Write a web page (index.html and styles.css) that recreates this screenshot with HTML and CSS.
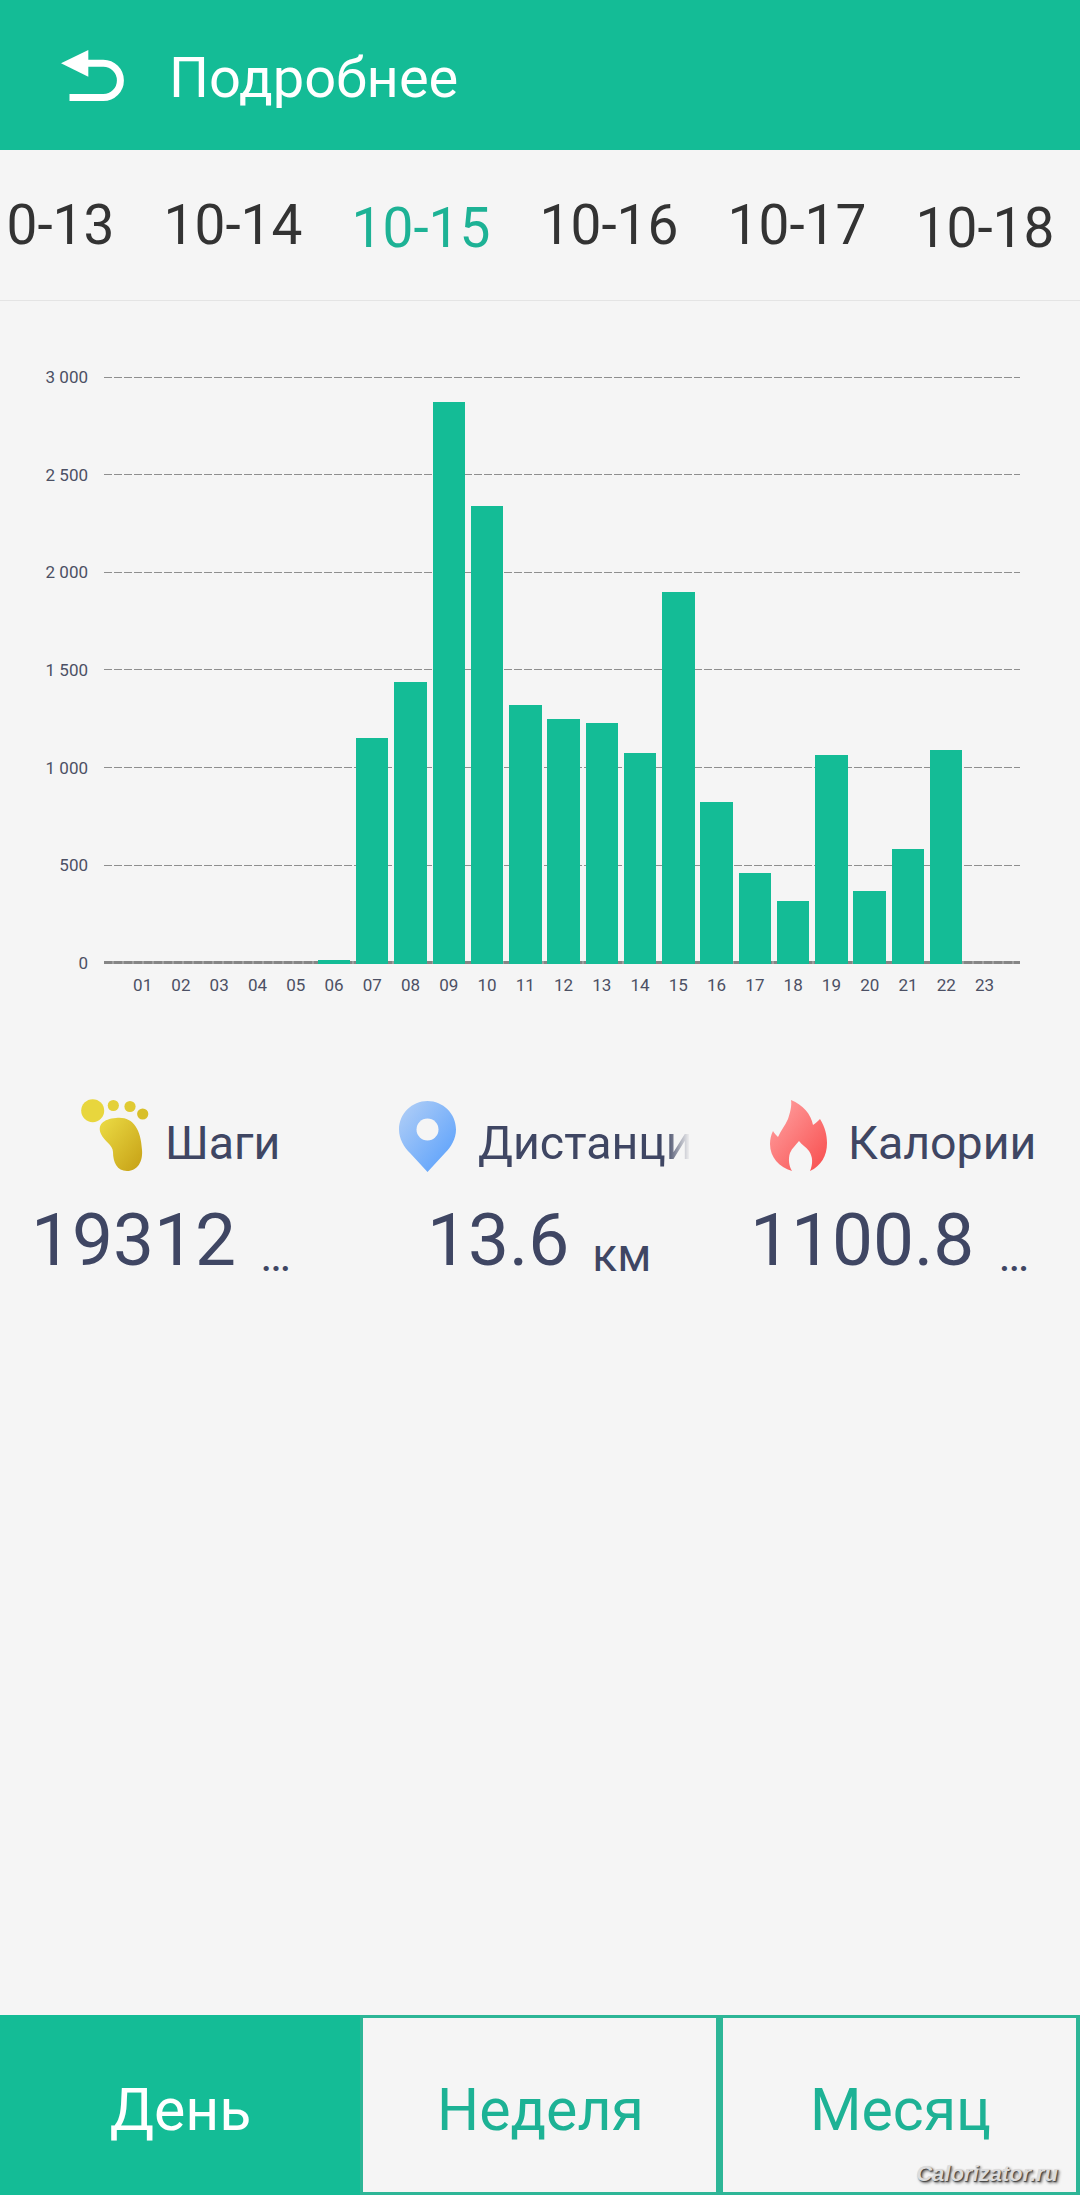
FILE: index.html
```html
<!DOCTYPE html>
<html lang="ru">
<head>
    <meta charset="UTF-8">
    <meta name="viewport" content="width=device-width, initial-scale=1.0">
    <title>Подробнее</title>
    <link rel="stylesheet" href="styles.css">
</head>
<body>
    <div class="page">
        <header class="header">
            <svg class="back-icon" viewBox="8 8 68 54" width="68" height="54">
                <path d="M10 23.3 37.3 10V36.7Z" fill="#fff"/>
                <path d="M36 23.3H52.3a17 17 0 0 1 0 34.2H18.5" fill="none" stroke="#fff" stroke-width="7"/>
            </svg>
            <h1 class="title">Подробнее</h1>
        </header>

        <div class="dates">
            <div class="date">10-13</div>
            <div class="date">10-14</div>
            <div class="date date-active">10-15</div>
            <div class="date">10-16</div>
            <div class="date">10-17</div>
            <div class="date date-low">10-18</div>
        </div>

        <section class="chart">
            <div class="plot">
                <div class="grid-row"><span class="grid-label">3 000</span><span class="grid-line"></span></div>
                <div class="grid-row"><span class="grid-label">2 500</span><span class="grid-line"></span></div>
                <div class="grid-row"><span class="grid-label">2 000</span><span class="grid-line"></span></div>
                <div class="grid-row"><span class="grid-label">1 500</span><span class="grid-line"></span></div>
                <div class="grid-row"><span class="grid-label">1 000</span><span class="grid-line"></span></div>
                <div class="grid-row"><span class="grid-label">500</span><span class="grid-line"></span></div>
                <div class="grid-row"><span class="grid-label">0</span><span class="grid-line grid-line-zero"></span></div>

                <div class="bars slots">
                    <div></div><div></div><div></div><div></div><div></div>
                    <div class="bar" style="height: 4px"></div>
                    <div class="bar" style="height: 226px"></div>
                    <div class="bar" style="height: 282px"></div>
                    <div class="bar" style="height: 562px"></div>
                    <div class="bar" style="height: 458px"></div>
                    <div class="bar" style="height: 259px"></div>
                    <div class="bar" style="height: 245px"></div>
                    <div class="bar" style="height: 241px"></div>
                    <div class="bar" style="height: 211px"></div>
                    <div class="bar" style="height: 372px"></div>
                    <div class="bar" style="height: 162px"></div>
                    <div class="bar" style="height: 91px"></div>
                    <div class="bar" style="height: 63px"></div>
                    <div class="bar" style="height: 209px"></div>
                    <div class="bar" style="height: 73px"></div>
                    <div class="bar" style="height: 115px"></div>
                    <div class="bar" style="height: 214px"></div>
                    <div></div>
                </div>
            </div>
            <div class="hours slots">
                <span>01</span><span>02</span><span>03</span><span>04</span><span>05</span><span>06</span>
                <span>07</span><span>08</span><span>09</span><span>10</span><span>11</span><span>12</span>
                <span>13</span><span>14</span><span>15</span><span>16</span><span>17</span><span>18</span>
                <span>19</span><span>20</span><span>21</span><span>22</span><span>23</span>
            </div>
        </section>

        <section class="stats">
            <div class="stat stat-steps">
                <div class="stat-head">
                    <svg class="stat-icon" viewBox="10 8 70 76" width="70" height="76">
                        <defs>
                            <linearGradient id="footFill" x1="0" y1="0" x2="1" y2="1">
                                <stop offset="0" stop-color="#ecdc45"/>
                                <stop offset="1" stop-color="#c6a015"/>
                            </linearGradient>
                        </defs>
                        <circle cx="22.7" cy="20.7" r="11.5" fill="#e8d63d"/>
                        <circle cx="43.3" cy="15.5" r="5.6" fill="#e4d039"/>
                        <circle cx="60" cy="16.5" r="5.6" fill="#e0ca33"/>
                        <circle cx="72.7" cy="24" r="5.6" fill="#d8bf2a"/>
                        <path d="M46 28C62 26 71 38 72 60 73 71 68 81 57 81 47 81 43 72 43 62 43 55 34 51 31 44 27 35 33 29 46 28Z" fill="url(#footFill)"/>
                    </svg>
                    <span class="stat-label">Шаги</span>
                </div>
                <div class="stat-value"><span class="number">19312</span><span class="unit">…</span></div>
            </div>

            <div class="stat stat-distance">
                <div class="stat-head">
                    <svg class="stat-icon" viewBox="0 0 57 71" width="57" height="71">
                        <defs>
                            <linearGradient id="pinFill" x1="0" y1="0" x2="1" y2="1">
                                <stop offset="0" stop-color="#b4d0f6"/>
                                <stop offset="1" stop-color="#549dfc"/>
                            </linearGradient>
                        </defs>
                        <path d="M28.5 0C44 0 57 12.5 57 28.5 57 38 52 46 46 52L28.5 71 11 52C5 46 0 38 0 28.5 0 12.5 13 0 28.5 0Z" fill="url(#pinFill)"/>
                        <circle cx="28.5" cy="28.5" r="11" fill="#f5f5f5"/>
                    </svg>
                    <span class="stat-label stat-label-fade">Дистанция</span>
                </div>
                <div class="stat-value"><span class="number">13.6</span><span class="unit">км</span></div>
            </div>

            <div class="stat stat-calories">
                <div class="stat-head">
                    <svg class="stat-icon" viewBox="8 9 60 74" width="60" height="74">
                        <defs>
                            <linearGradient id="flameFill" x1="0" y1="0" x2="1" y2="1">
                                <stop offset="0" stop-color="#ffa5a5"/>
                                <stop offset="1" stop-color="#f84c4c"/>
                            </linearGradient>
                        </defs>
                        <path d="M30 10C42 15 50 24 52 35 55 33 57 31 59 29 64 37 66 45 66 53 66 66 60 76 49 81 52 74 52 67 48 61 45 57 41 55 38 51 35 55 31 58 29 63 27 69 28 76 31 81 18 77 9 67 9 54 9 49 10 45 12 41 13 43 15 45 17 47 20 40 24 36 27 29 29 23 31 16 30 10Z" fill="url(#flameFill)"/>
                    </svg>
                    <span class="stat-label">Калории</span>
                </div>
                <div class="stat-value"><span class="number">1100.8</span><span class="unit">…</span></div>
            </div>
        </section>

        <nav class="tabs">
            <div class="tab tab-active">День</div>
            <div class="tab">Неделя</div>
            <div class="tab">Месяц</div>
        </nav>

        <div class="watermark">Calorizator.ru</div>
    </div>
</body>
</html>
```

FILE: styles.css
```css
* {
    margin: 0;
    padding: 0;
    box-sizing: border-box;
}

body {
    font-family: Roboto, sans-serif;
    background-color: #f5f5f5;
}

.page {
    position: relative;
    width: 1080px;
    height: 2195px;
    display: flex;
    flex-direction: column;
    overflow: hidden;
}

.header {
    height: 150px;
    flex-shrink: 0;
    background-color: #14bc96;
    display: flex;
    align-items: center;
    padding-left: 59px;
}

.back-icon {
    flex-shrink: 0;
}

.title {
    margin-left: 42px;
    padding-top: 6px;
    font-size: 56px;
    font-weight: 400;
    color: #fff;
}

/* date strip */
.dates {
    height: 151px;
    flex-shrink: 0;
    display: flex;
    align-items: center;
    margin-left: -49px;
    border-bottom: 1px solid #e4e4e4;
}

.date {
    flex: 0 0 188px;
    text-align: center;
    font-size: 55px;
    color: #333;
}

.date-active {
    padding-top: 5px;
    color: #1db295;
}

.date-low {
    padding-top: 5px;
}

/* chart */
.chart {
    margin-top: 76px;
}

.plot {
    position: relative;
    height: 586px;
    display: flex;
    flex-direction: column;
    justify-content: space-between;
}

.grid-row {
    height: 0;
    display: flex;
    align-items: center;
}

.grid-label {
    width: 88px;
    margin-right: 16px;
    text-align: right;
    font-size: 17px;
    color: #4c5064;
}

.grid-line {
    width: 916px;
    height: 1px;
    background: repeating-linear-gradient(to right, #8f8f8f 0 8px, transparent 8px 10px);
}

.grid-line-zero {
    height: 3px;
    background: repeating-linear-gradient(to right, #858585 0 8px, #a0a0a0 8px 10px);
}

.slots {
    display: grid;
    grid-template-columns: repeat(23, 38.27px);
    padding-left: 19.5px;
}

.bars {
    position: absolute;
    left: 104px;
    bottom: -1px;
    height: 586px;
    align-items: end;
}

.bar {
    width: 32.5px;
    justify-self: center;
    background-color: #14bc96;
}

.hours {
    margin: 12px 0 0 104px;
    font-size: 17px;
    line-height: 20px;
    color: #4c5064;
    text-align: center;
}

/* stats */
.stats {
    margin-top: 103px;
    display: grid;
    grid-template-columns: repeat(3, 360px);
}

.stat-head {
    height: 76px;
    display: flex;
    align-items: center;
}

.stat-icon {
    flex-shrink: 0;
}

.stat-label {
    padding-top: 14px;
    font-size: 46.5px;
    color: #3f4663;
    white-space: nowrap;
}

.stat-label-fade {
    width: 212px;
    overflow: hidden;
    -webkit-mask-image: linear-gradient(to right, #000 188px, transparent);
    mask-image: linear-gradient(to right, #000 188px, transparent);
}

.stat-value {
    margin-top: 24px;
    display: flex;
    align-items: flex-end;
    color: #3f4663;
}

.number {
    font-size: 73px;
    line-height: 84px;
}

.unit {
    font-size: 46px;
    line-height: 54px;
}

.stat-steps .stat-head {
    padding-left: 80px;
}

.stat-steps .stat-label {
    margin-left: 15px;
}

.stat-steps .stat-value {
    padding-left: 31px;
}

.stat-steps .unit {
    margin-left: 24px;
}

.stat-distance .stat-head {
    padding-left: 39px;
}

.stat-distance .stat-label {
    margin-left: 22px;
}

.stat-distance .stat-value {
    padding-left: 67px;
}

.stat-distance .unit {
    margin-left: 23px;
}

.stat-calories .stat-head {
    padding-left: 49px;
}

.stat-calories .stat-label {
    margin-left: 19px;
}

.stat-calories .stat-value {
    padding-left: 30px;
}

.stat-calories .unit {
    margin-left: 24px;
}

/* bottom tabs */
.tabs {
    margin-top: auto;
    height: 180px;
    flex-shrink: 0;
    display: flex;
}

.tab {
    flex: 1;
    display: flex;
    align-items: center;
    justify-content: center;
    padding: 9px 0 0 2px;
    border: 3px solid #2db697;
    border-right-width: 4px;
    font-size: 59px;
    color: #1db295;
}

.tab-active {
    background-color: #14bc96;
    border-color: #14bc96;
    color: #fff;
}

.watermark {
    position: absolute;
    right: 22px;
    bottom: 8px;
    font-family: "Liberation Sans", sans-serif;
    font-size: 22px;
    font-weight: bold;
    font-style: italic;
    color: #dcdcdc;
    text-shadow: 1px 1px 1px #444, 2px 2px 3px #666;
}
```
